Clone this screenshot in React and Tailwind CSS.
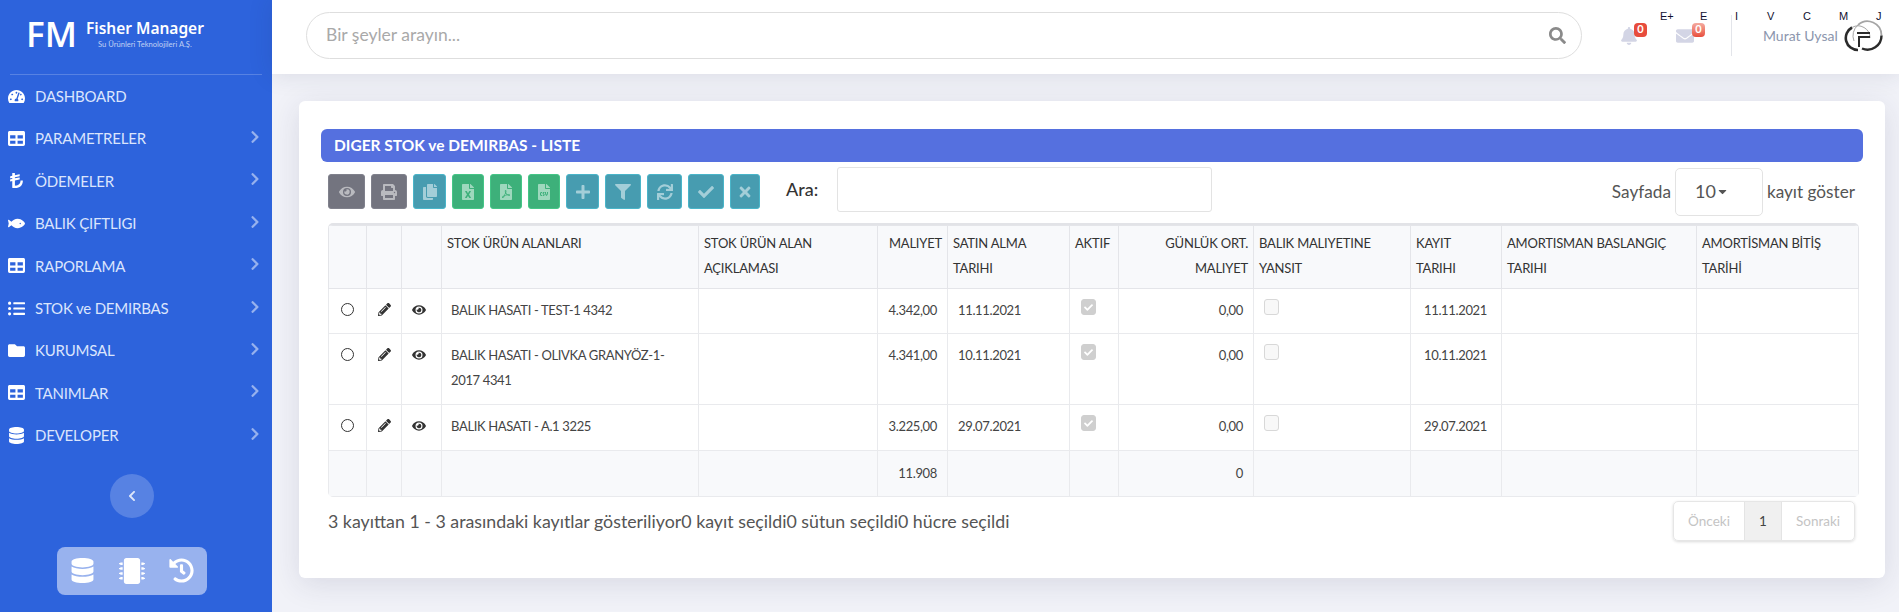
import {
  FaBell, FaCheck, FaChevronLeft, FaChevronRight, FaCopy, FaCaretDown, FaDatabase, FaEnvelope, FaEye,
  FaFileCsv, FaFileExcel, FaFilePdf, FaFilter, FaFish, FaFolder, FaHistory, FaLiraSign, FaListUl,
  FaMicrochip, FaPencilAlt, FaPlus, FaPrint, FaSearch, FaSync, FaTable, FaTachometerAlt, FaTimes,
} from "react-icons/fa";

const menu = [
  { label: "DASHBOARD", icon: FaTachometerAlt },
  { label: "PARAMETRELER", icon: FaTable, arrow: true },
  { label: "ÖDEMELER", icon: FaLiraSign, arrow: true },
  { label: "BALIK ÇIFTLIGI", icon: FaFish, arrow: true },
  { label: "RAPORLAMA", icon: FaTable, arrow: true },
  { label: "STOK ve DEMIRBAS", icon: FaListUl, arrow: true },
  { label: "KURUMSAL", icon: FaFolder, arrow: true },
  { label: "TANIMLAR", icon: FaTable, arrow: true },
  { label: "DEVELOPER", icon: FaDatabase, arrow: true },
];

const gray = "bg-[#73747f] border-[#80818c]";
const teal = "bg-[#479cb0] border-[#4ab5c9]";
const green = "bg-[#3db07a] border-[#45c687]";

const tools = [
  { icon: FaEye, cls: gray, w: "w-[37px]" },
  { icon: FaPrint, cls: gray, w: "w-[36px]" },
  { icon: FaCopy, cls: teal, w: "w-[33px]" },
  { icon: FaFileExcel, cls: green, w: "w-[32px]" },
  { icon: FaFilePdf, cls: green, w: "w-[32px]" },
  { icon: FaFileCsv, cls: green, w: "w-[32px]" },
  { icon: FaPlus, cls: teal, w: "w-[33px]" },
  { icon: FaFilter, cls: teal, w: "w-[36px]" },
  { icon: FaSync, cls: teal, w: "w-[35px]" },
  { icon: FaCheck, cls: teal, w: "w-[36px]" },
  { icon: FaTimes, cls: teal, w: "w-[30px]" },
];

const columns = [
  { w: "w-[38px]" },
  { w: "w-[35px]" },
  { w: "w-[40px]" },
  { w: "w-[257px]", lines: ["STOK ÜRÜN ALANLARI"] },
  { w: "w-[179px]", lines: ["STOK ÜRÜN ALAN", "AÇIKLAMASI"] },
  { w: "w-[70px]", lines: ["MALIYET"], right: true },
  { w: "w-[122px]", lines: ["SATIN ALMA", "TARIHI"] },
  { w: "w-[49px]", lines: ["AKTIF"] },
  { w: "w-[135px]", lines: ["GÜNLÜK ORT.", "MALIYET"], right: true },
  { w: "w-[157px]", lines: ["BALIK MALIYETINE", "YANSIT"] },
  { w: "w-[91px]", lines: ["KAYIT", "TARIHI"] },
  { w: "w-[195px]", lines: ["AMORTISMAN BASLANGIÇ", "TARIHI"] },
  { w: "w-[162px]", lines: ["AMORTİSMAN BİTİŞ", "TARİHİ"] },
];

const rows = [
  { name: ["BALIK HASATI - TEST-1 4342"], cost: "4.342,00", date: "11.11.2021", h: "h-[45px]" },
  { name: ["BALIK HASATI - OLIVKA GRANYÖZ-1-", "2017 4341"], cost: "4.341,00", date: "10.11.2021", h: "h-[71px]" },
  { name: ["BALIK HASATI - A.1 3225"], cost: "3.225,00", date: "29.07.2021", h: "h-[46px]" },
];

const th = "border border-[#e4e5e9] px-[5px] pt-[5px] pb-[7px] align-top font-normal tracking-[-0.2px]";
const td = "border border-[#e9eaed] align-top tracking-[-0.35px]";
const textCell = "pt-[9px] pb-[10px]";

const FisherMark = () => (
  <svg viewBox="0 0 40 40" className="h-[40px] w-[40px]" fill="none">
    <path d="M8 11.5 A12 12 0 0 0 14 34" stroke="#2b2b2b" strokeWidth="2.6" />
    <path d="M8 11.5 A12 12 0 0 1 26 22" stroke="#a5a5a5" strokeWidth="1" />
    <path d="M14 9 A14 14 0 0 1 37.5 19.5" stroke="#a5a5a5" strokeWidth="1.8" />
    <path d="M37.5 19.5 A14 14 0 0 1 18 32.5" stroke="#2b2b2b" strokeWidth="2.4" />
    <path d="M14 9 A14 14 0 0 0 10 25" stroke="#a5a5a5" strokeWidth="1" />
    <path d="M13 17 H26 M26 21 H15 V31" stroke="#2b2b2b" strokeWidth="2" />
  </svg>
);

const Sidebar = () => (
  <aside className="flex w-[272px] shrink-0 flex-col bg-[#2d63dc] text-white">
    <div className="mx-[10px] flex h-[75px] items-start border-b border-white/20 pl-[16px] pt-[15px]">
      <span className="font-['Open_Sans',sans-serif] text-[35px] leading-[38px] font-semibold">FM</span>
      <div className="ml-[9px] pt-[4px] text-center">
        <div className="font-['Noto_Sans',sans-serif] text-[15.5px] leading-[19px] font-semibold">Fisher Manager</div>
        <div className="mt-[2px] font-['Lato',sans-serif] text-[7.6px] leading-[9px] text-white/70">Su Ürünleri Teknolojileri A.Ş.</div>
      </div>
    </div>
    <nav className="flex flex-col">
      {menu.map(({ label, icon: Icon, arrow }) => (
        <div key={label} className="flex h-[42.4px] items-center pl-[7px] pr-[10px]">
          <span className="flex w-[18px] justify-center"><Icon className="text-[17px]" /></span>
          <span className="ml-[10px] text-[15px] tracking-[-0.2px] text-[#dbe5fc]">{label}</span>
          {arrow && <FaChevronRight className="ml-auto -mt-[3px] text-[14px] text-white/50" />}
        </div>
      ))}
    </nav>
    <button className="ml-[110px] mt-[17px] flex h-[44px] w-[44px] items-center justify-center rounded-full bg-white/20">
      <FaChevronLeft className="text-[12px] text-white/80" />
    </button>
    <div className="ml-[57px] mt-[29px] flex h-[48px] w-[150px] items-center justify-between rounded-lg bg-[#98b2ee] px-[13px]">
      <FaDatabase className="text-[25px]" />
      <FaMicrochip className="text-[26px]" />
      <FaHistory className="text-[25px]" />
    </div>
  </aside>
);

const Topbar = () => (
  <header className="relative z-10 flex h-[74px] items-center bg-white pb-[3px] pl-[34px] shadow-[0_0_25px_rgba(40,45,80,0.13)]">
    <div className="flex h-[47px] w-[1276px] items-center justify-between rounded-full border border-[#dedede] pl-[19px] pr-[15px]">
      <span className="text-[17.5px] text-[#a9a9a9]">Bir şeyler arayın...</span>
      <FaSearch className="text-[17px] text-[#8a8a8a]" />
    </div>
    <div className="relative ml-[38px] h-[18px] w-[18px]">
      <FaBell className="text-[18px] text-[#d3d5e5]" />
      <span className="absolute -top-[4px] left-[14px] flex h-[14px] w-[13px] items-center justify-center rounded-[4px] bg-[#e74c3c] text-[11px] font-bold text-white">0</span>
    </div>
    <div className="relative ml-[38px] h-[18px] w-[18px]">
      <FaEnvelope className="text-[18px] text-[#d3d5e5]" />
      <span className="absolute -top-[4px] left-[16px] flex h-[14px] w-[13px] items-center justify-center rounded-[4px] bg-linear-to-b from-[#f3aaa0] to-[#e74c3c] text-[11px] font-bold text-white">0</span>
    </div>
    <div className="ml-[37px] h-[41px] w-px bg-[#e3e5ea]" />
    <span className="ml-[31px] text-[14px] text-[#8c96ad]">Murat Uysal</span>
    <span className="ml-[6px]"><FisherMark /></span>
    <div className="absolute top-[10px] left-[1388px] flex font-['Liberation_Sans',sans-serif] text-[11px] leading-[12px] text-[#101030]">
      <span className="w-[40px]">E+</span>
      <span className="w-[35px]">E</span>
      <span className="w-[32px]">I</span>
      <span className="w-[36px]">V</span>
      <span className="w-[36px]">C</span>
      <span className="w-[37px]">M</span>
      <span>J</span>
    </div>
  </header>
);

const Box = ({ checked }) => (
  <span className={`mt-[10px] flex h-[16px] w-[15px] items-center justify-center rounded-[3px] border ${checked ? "border-[#cfcfcf] bg-[#cfcfcf]" : "border-[#d8d8d8] bg-[#f8f8f8]"}`}>
    {checked && <FaCheck className="text-[9px] text-white" />}
  </span>
);

const DataTable = () => (
  <div className="ml-[7px] mr-[4px] mt-[7px] overflow-hidden rounded-[5px] border-t-2 border-[#e2e3e7]">
    <table className="w-[1530px] table-fixed border-collapse text-[13px] leading-[25px] text-[#333]">
      <colgroup>
        {columns.map((c, i) => <col key={i} className={c.w} />)}
      </colgroup>
      <thead>
        <tr className="bg-[#f8f9fb]">
          {columns.map((c, i) => (
            <th key={i} className={`${th} ${c.right ? "text-right" : "text-left"}`}>
              {c.lines?.map((l) => <div key={l}>{l}</div>)}
            </th>
          ))}
        </tr>
      </thead>
      <tbody className="text-[#444]">
        {rows.map((r) => (
          <tr key={r.cost} className={r.h}>
            <td className={td}><span className="mx-auto mt-[14px] block h-[13px] w-[13px] rounded-full border border-[#333]" /></td>
            <td className={td}><FaPencilAlt className="mx-auto mt-[14px] text-[13px] text-[#333]" /></td>
            <td className={`${td} pr-[5px]`}><FaEye className="mx-auto mt-[14px] text-[14px] text-[#333]" /></td>
            <td className={`${td} ${textCell} pl-[9px]`}>{r.name.map((l) => <div key={l}>{l}</div>)}</td>
            <td className={td} />
            <td className={`${td} ${textCell} pr-[10px] text-right`}>{r.cost}</td>
            <td className={`${td} ${textCell} pl-[10px]`}>{r.date}</td>
            <td className={`${td} pl-[11px]`}><Box checked /></td>
            <td className={`${td} ${textCell} pr-[10px] text-right`}>0,00</td>
            <td className={`${td} pl-[10px]`}><Box /></td>
            <td className={`${td} ${textCell} pl-[13px]`}>{r.date}</td>
            <td className={td} />
            <td className={td} />
          </tr>
        ))}
        <tr className="h-[46px] bg-[#f8f9fb]">
          {columns.map((c, i) => (
            <td key={i} className="border border-[#e9eaed] pr-[10px] text-right align-middle tracking-[-0.35px]">
              {i === 5 ? "11.908" : i === 8 ? "0" : ""}
            </td>
          ))}
        </tr>
      </tbody>
    </table>
  </div>
);

const App = () => (
  <div className="flex h-[612px] w-[1899px] overflow-hidden bg-[#f1f2f8] font-['Lato',sans-serif]">
    <Sidebar />
    <div className="flex min-w-0 flex-1 flex-col">
      <Topbar />
      <main className="pl-[27px] pr-[14px] pt-[27px]">
        <section className="h-[477px] rounded-[6px] bg-white px-[22px] pt-[28px] shadow-[0_6px_30px_rgba(40,45,80,0.12)]">
          <h2 className="flex h-[33px] items-center rounded-[6px] bg-[#5570df] pl-[13px] text-[15.5px] font-bold text-white">
            DIGER STOK ve DEMIRBAS - LISTE
          </h2>
          <div className="mx-[7px] mt-[5px] flex h-[49px] items-center gap-[6px]">
            {tools.map(({ icon: Icon, cls, w }, i) => (
              <button key={i} className={`flex h-[35px] ${w} items-center justify-center rounded-[3px] border ${cls}`}>
                <Icon className="text-[16px] text-white/50" />
              </button>
            ))}
            <span className="ml-[20px] -mt-[4px] text-[18px] font-medium text-[#333]">Ara:</span>
            <input className="ml-[13px] -mt-[4px] h-[45px] w-[375px] rounded-[3px] border border-[#e3e3e3]" />
            <div className="ml-auto flex items-center gap-[4px] pr-[1px] text-[17.2px] text-[#555]">
              <span>Sayfada</span>
              <div className="flex h-[48px] w-[88px] items-center rounded-[5px] border border-[#e3e3e3] pl-[19px] text-[18px]">
                10<FaCaretDown className="text-[13px]" />
              </div>
              <span>kayıt göster</span>
            </div>
          </div>
          <DataTable />
          <div className="mx-[7px] mt-[4px] flex items-start justify-between">
            <span className="mt-[7px] text-[17.8px] text-[#555]">3 kayıttan 1 - 3 arasındaki kayıtlar gösteriliyor0 kayıt seçildi0 sütun seçildi0 hücre seçildi</span>
            <div className="mr-[1px] flex h-[40px] w-[182px] items-center rounded-[5px] border border-[#e6e6e6] text-[13.5px] text-[#c4c4c4] shadow-[0_1px_3px_rgba(0,0,0,0.15)]">
              <span className="w-[70px] text-center">Önceki</span>
              <span className="flex h-full w-[38px] items-center justify-center border-x border-[#e4e4e4] bg-[#f0f0f0] text-[#444]">1</span>
              <span className="flex-1 text-center">Sonraki</span>
            </div>
          </div>
        </section>
      </main>
    </div>
  </div>
);

export default App;
